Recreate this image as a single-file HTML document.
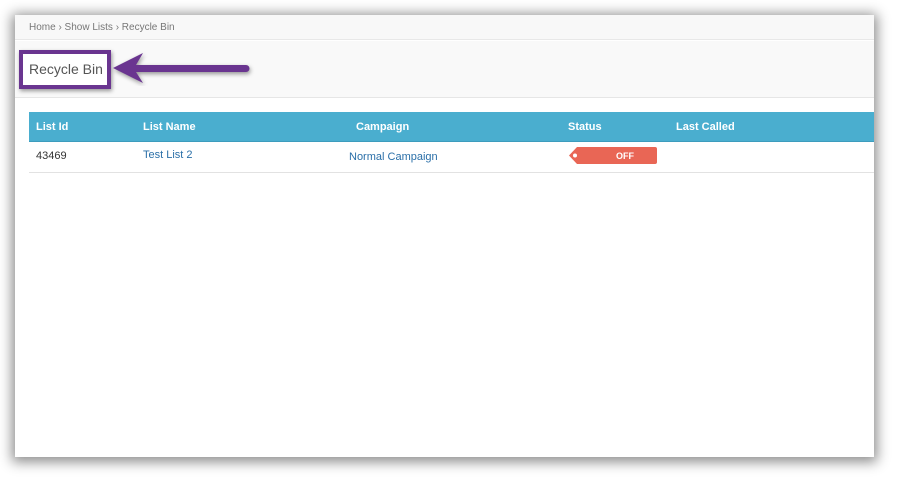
<!DOCTYPE html>
<html><head><style>
body{margin:0;width:899px;height:482px;background:#fff;position:relative;overflow:hidden;font-family:"Liberation Sans",sans-serif}
#p{position:absolute;left:15px;top:15px;width:859px;height:442px;background:#fff;box-shadow:0 2px 12px 3px rgba(0,0,0,.45);overflow:hidden}
#bc{position:absolute;left:0;top:0;width:859px;height:25px;background:#f8f8f8;border-bottom:1px solid #e8e8e8;font-size:10px;color:#777;line-height:26px;padding-left:14px;box-sizing:border-box}
#hd{position:absolute;left:0;top:26px;width:859px;height:56px;background:#f9f9f9;border-bottom:1px solid #e6e6e6}
#th{position:absolute;left:14px;top:97px;width:845px;height:29px;background:#4aaecf;border-bottom:1px solid #3d9cbd;color:#fff;font-size:11px;font-weight:bold}
#th span,#tr span{position:absolute;top:9px}
#tr{position:absolute;left:14px;top:127px;width:845px;height:30px;border-bottom:1px solid #e2e2e2;font-size:11px;color:#333}
.l{color:#2a6fa8}
</style></head><body>
<div id="p">
<div id="bc">Home › Show Lists › Recycle Bin</div>
<div id="hd"></div>
<div id="th"><span style="left:7px">List Id</span><span style="left:114px">List Name</span><span style="left:327px">Campaign</span><span style="left:539px">Status</span><span style="left:647px">Last Called</span></div>
<div id="tr"><span style="left:7px;top:8px">43469</span><span class="l" style="left:114px;top:7px">Test List 2</span><span class="l" style="left:320px;top:9px">Normal Campaign</span>
<svg style="position:absolute;left:540px;top:5px" width="90" height="18"><path d="M8 0H86a2 2 0 0 1 2 2V15a2 2 0 0 1-2 2H8L0 8.5Z" fill="#e96655"/><circle cx="6" cy="8.5" r="2" fill="#fff"/><text x="56" y="12" fill="#fff" font-size="9" font-weight="bold" font-family="Liberation Sans" text-anchor="middle">OFF</text></svg>
</div>
</div>
<div style="position:absolute;left:19px;top:50px;width:78px;height:31px;border:4px solid #6a3590;background:#fff;box-shadow:1px 2px 4px rgba(0,0,0,.4);font-size:14px;color:#555;line-height:31px;padding-left:6px;white-space:nowrap">Recycle Bin</div>
<svg style="position:absolute;left:108px;top:50px" width="150" height="36"><path d="M5 18L35 3L28 15H138a3.5 3.5 0 0 1 0 7H28L35 33Z" fill="#6a3590" style="filter:drop-shadow(1px 2px 2px rgba(0,0,0,.4))"/></svg>
</body></html>
